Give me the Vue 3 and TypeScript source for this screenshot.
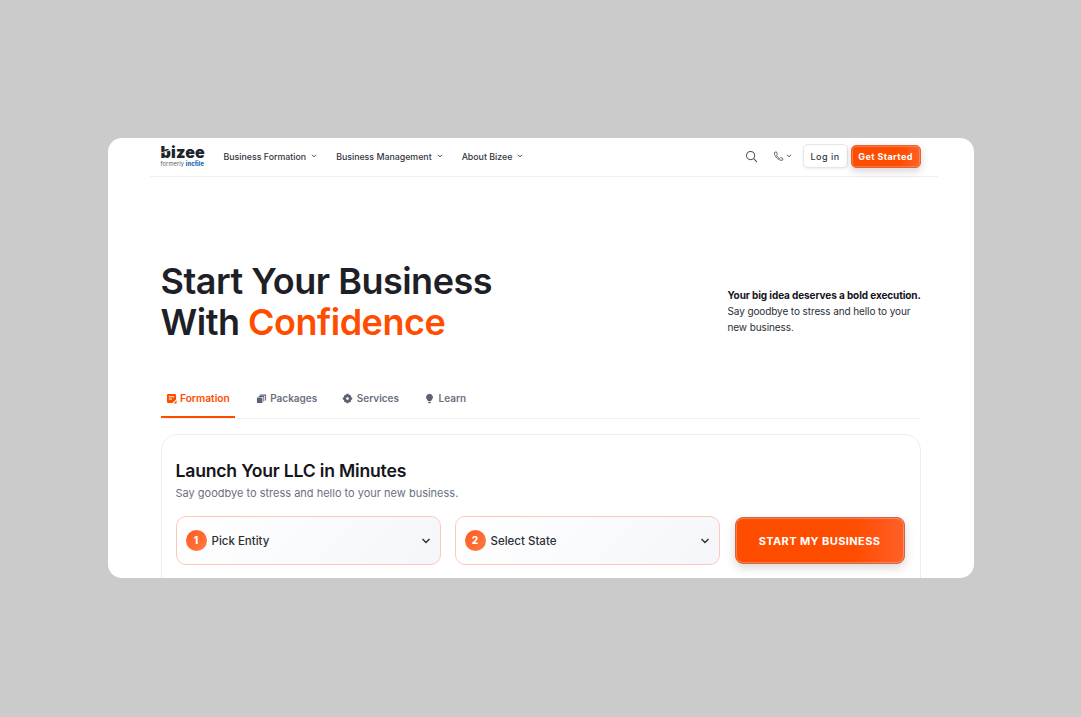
<template>
  <div class="page">
    <main class="panel">
      <header class="nav">
        <div class="brand">
          <span class="logo">bizee</span>
          <span class="formerly">formerly <b>incfile</b></span>
        </div>
        <nav class="links">
          <a v-for="link in links" :key="link" class="link">
            {{ link }}
            <svg class="chev" viewBox="0 0 10 10"><path d="M2.500 3.500 5 6 7.500 3.500" /></svg>
          </a>
        </nav>
        <div class="actions">
          <svg class="search" viewBox="0 0 14 14"><circle cx="6" cy="6" r="4.400" /><path d="M9.300 9.300 12.800 12.800" /></svg>
          <span class="phone">
            <svg viewBox="0 0 12 12"><path d="M2.200 1.300 3.800 1c.3 1 .6 1.800 1 2.500L3.800 4.600c.6 1.600 1.800 2.900 3.400 3.600l1.100-1c.7.4 1.500.7 2.400.9l-.2 1.700c-.1.300-.3.400-.6.400C5.500 10.100 1.700 6.300 1.500 2c0-.4.300-.7.700-.7Z" /></svg>
            <svg class="chev" viewBox="0 0 10 10"><path d="M2.500 3.500 5 6 7.500 3.500" /></svg>
          </span>
          <button class="login">Log in</button>
          <button class="started">Get Started</button>
        </div>
      </header>

      <section class="content">
        <div class="hero">
          <h1>Start Your Business<br />With <em>Confidence</em></h1>
          <p class="pitch">
            <strong>Your big idea deserves a bold execution.</strong><br />
            Say goodbye to stress and hello to your<br />new business.
          </p>
        </div>

        <div class="tabs">
          <a class="tab active">
            <svg viewBox="0 0 12 12"><path fill-rule="evenodd" d="M2.500 1h7A1.500 1.500 0 0 1 11 2.500V7L7 11H2.500A1.500 1.500 0 0 1 1 9.500v-7A1.500 1.500 0 0 1 2.500 1ZM3 3.500V4.700H9V3.500ZM3 6V7.200H6.500V6Z" /><path d="M11.500 8 8.500 11.500H11.500Z" /></svg>
            Formation
          </a>
          <a class="tab">
            <svg viewBox="0 0 12 12"><path d="M4 1.500h6.500a.5.5 0 0 1 .5.500v6l-1 .5V3H4ZM2.800 3.200H8.500a.5.5 0 0 1 .5.500V9l-1 .5V4.300H2.800ZM1.500 5h5a.5.500 0 0 1 .5.500v5a.5.500 0 0 1-.5.500h-5a.5.500 0 0 1-.5-.500v-5A.5.500 0 0 1 1.500 5Z" /></svg>
            Packages
          </a>
          <a class="tab">
            <svg viewBox="0 0 12 12"><path fill-rule="evenodd" d="M4.800.8h2.400l.3 1.500 1-.5 1.600 1.500-.6 1.200 1.700.4v2.300l-1.700.4.600 1.200-1.600 1.600-1-.6-.3 1.500H4.800l-.3-1.500-1 .6-1.600-1.600.6-1.200L.8 7.200V4.900l1.700-.4-.6-1.200 1.600-1.500 1 .5ZM6 4.500a1.500 1.500 0 1 0 0 3 1.500 1.500 0 0 0 0-3Z" /></svg>
            Services
          </a>
          <a class="tab">
            <svg viewBox="0 0 12 12"><path d="M6 .8a3.900 3.900 0 0 1 2.300 7c-.3.200-.4.500-.4.900H4.100c0-.4-.1-.7-.4-.9A3.900 3.900 0 0 1 6 .8ZM4.500 9.500h3v.8L6.800 11.300H5.200L4.500 10.300Z" /></svg>
            Learn
          </a>
        </div>

        <div class="card">
          <h2>Launch Your LLC in Minutes</h2>
          <p class="sub">Say goodbye to stress and hello to your new business.</p>
          <div class="row">
            <button v-for="(step, i) in steps" :key="step" class="select">
              <span class="num">{{ i + 1 }}</span>
              <span class="label">{{ step }}</span>
              <svg class="caret" viewBox="0 0 10 10"><path d="M1.500 3 5 6.500 8.500 3" /></svg>
            </button>
            <button class="cta">START MY BUSINESS</button>
          </div>
        </div>
      </section>
    </main>
  </div>
</template>

<script setup lang="ts">
const links: string[] = ['Business Formation', 'Business Management', 'About Bizee'];
const steps: string[] = ['Pick Entity', 'Select State'];
</script>

<style>
body {
  background: #cbcbcb;
}
</style>

<style scoped>
.page {
  height: 716px;
  display: flex;
  align-items: center;
  justify-content: center;
  font-family: Inter, "Noto Sans", sans-serif;
  color: #1f1f27;
}

.panel {
  width: 866px;
  height: 440px;
  background: #fff;
  border-radius: 14px;
  overflow: hidden;
}

.nav {
  height: 36px;
  margin: 0 36px 0 42px;
  padding: 0 17px 2px 11px;
  border-bottom: 1px solid #eef0f3;
  display: flex;
  align-items: center;
}

.brand {
  width: 63px;
  display: flex;
  flex-direction: column;
  line-height: 1;
}

.logo {
  position: relative;
  font-size: 16px;
  font-weight: 900;
  letter-spacing: 0.2px;
  line-height: 13px;
  color: #20232a;
}

/* slash through the b of the logo */
.logo::after {
  content: "";
  position: absolute;
  left: 0;
  top: 5px;
  width: 9px;
  height: 1px;
  background: #fff;
  transform: rotate(-18deg);
}

.formerly {
  margin-top: 2px;
  font-size: 5.700px;
  letter-spacing: 0.1px;
  color: #555b66;
  line-height: 6px;
}

.formerly b {
  color: #1667b0;
  font-weight: 800;
}

.links {
  display: flex;
  gap: 18px;
}

.link {
  display: flex;
  align-items: center;
  gap: 4px;
  font-size: 8.800px;
  font-weight: 500;
  color: #33363e;
}

.chev {
  width: 8px;
  height: 8px;
}

.chev path,
.caret path {
  fill: none;
  stroke: #2b2e36;
  stroke-width: 1.100;
}

.actions {
  margin-left: auto;
  display: flex;
  align-items: center;
}

.search {
  width: 13px;
  height: 13px;
  margin-right: 15px;
}

.search circle,
.search path {
  fill: none;
  stroke: #4b4f58;
  stroke-width: 1.100;
}

.phone {
  display: flex;
  align-items: center;
  gap: 1px;
  margin-right: 10px;
}

.phone svg:first-child {
  width: 11px;
  height: 11px;
}

.phone svg:first-child path {
  fill: none;
  stroke: #4b4f58;
  stroke-width: 0.900;
}

button {
  font-family: inherit;
  cursor: pointer;
}

.login {
  width: 45px;
  height: 24px;
  margin-right: 3px;
  padding: 0;
  background: #fff;
  border: 1px solid #e4e5e8;
  border-radius: 5px;
  font-size: 9px;
  font-weight: 500;
  letter-spacing: 0.5px;
  color: #33363e;
  box-shadow: 0 1px 2px rgba(30, 30, 40, 0.08);
}

.started {
  width: 70px;
  height: 23px;
  padding: 0;
  background: linear-gradient(90deg, #ff4d00 70%, #ff6029);
  border: 1px solid #e2623a;
  border-radius: 5px;
  font-size: 9px;
  font-weight: 700;
  letter-spacing: 0.4px;
  color: #fff;
  box-shadow: inset 0 0 0 1px rgba(255, 255, 255, 0.22), 0 3px 8px rgba(60, 40, 30, 0.2);
}

.content {
  padding: 0 53px;
}

.hero {
  display: flex;
  justify-content: space-between;
  padding-top: 84px;
}

h1 {
  margin: 0;
  font-size: 36px;
  font-weight: 600;
  line-height: 41px;
  letter-spacing: -0.5px;
  color: #1f1f27;
}

h1 em {
  font-style: normal;
  color: #ff4d00;
}

.pitch {
  margin: 26px 0 0;
  width: 193px;
  font-size: 10px;
  line-height: 16px;
  letter-spacing: -0.1px;
  white-space: nowrap;
  color: #2b2e36;
}

.pitch strong {
  font-weight: 700;
  color: #14141a;
}

.tabs {
  margin-top: 39px;
  height: 36px;
  display: flex;
  gap: 17px;
  border-bottom: 1px solid #f0f1f4;
}

.tab {
  display: flex;
  align-items: center;
  gap: 3.500px;
  height: 36px;
  padding: 0 4px 4px;
  box-sizing: border-box;
  font-size: 10px;
  font-weight: 600;
  color: #6b7080;
}

.tab svg {
  width: 11px;
  height: 11px;
  fill: #5c6272;
}

.tab.active {
  padding: 0 5px 2px;
  font-size: 10.200px;
  color: #ff4d00;
  border-bottom: 2px solid #ff4d00;
}

.tab.active svg {
  fill: #ff4d00;
}

.card {
  margin-top: 15px;
  padding: 25px 14px 0;
  height: 180px;
  box-sizing: border-box;
  border: 1px solid #eceef2;
  border-radius: 16px;
}

h2 {
  margin: 0;
  font-size: 17.600px;
  font-weight: 600;
  line-height: 22px;
  letter-spacing: -0.2px;
  color: #15151b;
}

.sub {
  margin: 3px 0 0;
  font-size: 11px;
  line-height: 16px;
  color: #6b7080;
}

.row {
  margin-top: 15px;
  display: flex;
  align-items: center;
  gap: 14px;
}

.select {
  flex: none;
  width: 265px;
  height: 49px;
  padding: 0 9px;
  display: flex;
  align-items: center;
  background: linear-gradient(135deg, #fff, #f4f6f9);
  border: 1px solid #ffc9b8;
  border-radius: 10px;
  font-size: 11.500px;
  font-weight: 500;
  color: #2b2e36;
}

.num {
  width: 21px;
  height: 21px;
  margin-right: 5px;
  border-radius: 50%;
  background: linear-gradient(135deg, #ff5a1f, #ff7a45);
  color: #fff;
  font-size: 10px;
  font-weight: 800;
  line-height: 21px;
  text-align: center;
}

.label {
  flex: 1;
  text-align: left;
}

.caret {
  width: 10px;
  height: 10px;
}

.caret path {
  stroke-width: 1.400;
}

.cta {
  flex: none;
  width: 170px;
  height: 47px;
  padding: 0;
  margin-left: 1px;
  background: linear-gradient(90deg, #ff4d00 70%, #ff6029);
  border: 1px solid #c8674f;
  border-radius: 8px;
  font-size: 11px;
  font-weight: 700;
  letter-spacing: 0.4px;
  color: #fff;
  box-shadow: inset 0 0 0 1px rgba(255, 255, 255, 0.25), 0 4px 10px rgba(60, 40, 30, 0.18);
}
</style>
